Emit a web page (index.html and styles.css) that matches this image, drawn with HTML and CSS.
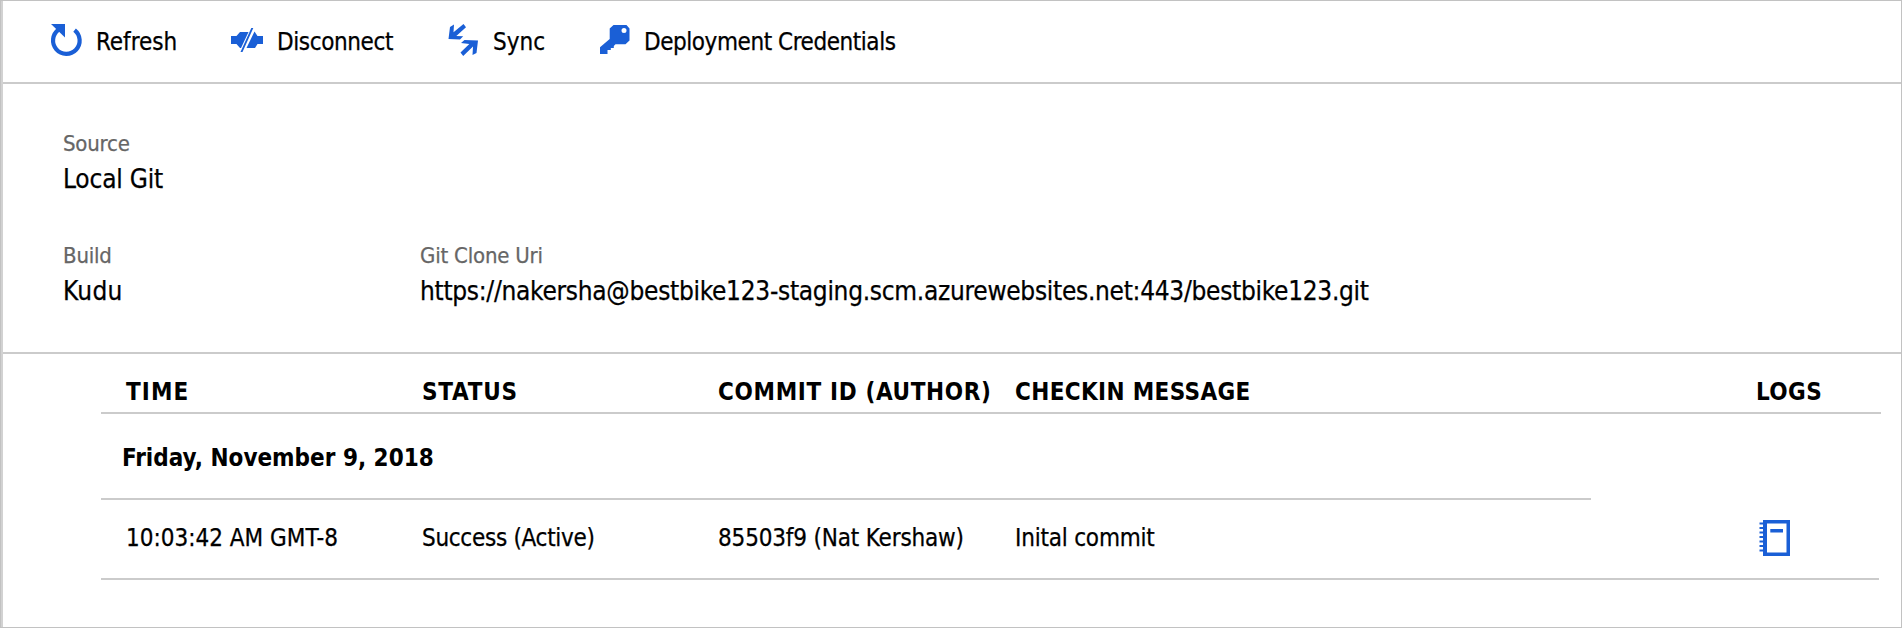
FILE: index.html
```html
<!DOCTYPE html>
<html lang="en">
<head>
<meta charset="utf-8">
<title>Deployment Center</title>
<link rel="stylesheet" href="styles.css">
</head>
<body>
<main class="panel">
  <nav class="toolbar">
    <a class="command">
      <svg class="icon" viewBox="0 0 32 32"><path d="M8.500 5.800A13.300 13.300 0 1 0 24.600 6.100" fill="none" stroke="currentColor" stroke-width="4.200"/><path d="M1 0h14v13.500z"/></svg>
      <span class="refresh">Refresh</span>
    </a>
    <a class="command">
      <svg class="icon" viewBox="0 0 32 32"><path d="M0 12h5.500L9 8h8.500L10 24H9l-3.500-4H0zM23.500 7.500 26.500 12H32v8h-5.500L24 24h-8.500zM20.300 4h2L11.500 28h-2z"/></svg>
      <span class="disconnect">Disconnect</span>
    </a>
    <a class="command">
      <svg class="icon" viewBox="0 0 32 32"><path d="M16.500 0l2.500 3.300L9.300 12l6.900.200-3.200 3.300L1.500 15 3 3l4-2.500-.500 7.700zM14 19l3.500-3L31 16.400 29.500 29l-4 2 .500-8.500L16.200 32 13.500 28.600 22.300 20z"/></svg>
      <span>Sync</span>
    </a>
    <a class="command">
      <svg class="icon" viewBox="0 0 32 32"><path fill-rule="evenodd" d="M15.500 1h13l3 3.500v12l-4 3.800H17.500L15.800 22v2h-3v2H9.500v4H2v-6.700L11.700 15V4.500zM26 4a2.500 2.500 0 1 0 0 5 2.500 2.500 0 0 0 0-5z"/></svg>
      <span class="credentials">Deployment Credentials</span>
    </a>
  </nav>

  <section class="details">
    <div class="field">
      <div class="label">Source</div>
      <div class="value">Local Git</div>
    </div>
    <div class="field build">
      <div class="label">Build</div>
      <div class="value kudu">Kudu</div>
    </div>
    <div class="field">
      <div class="label">Git Clone Uri</div>
      <div class="value uri">https://nakersha@bestbike123-staging.scm.azurewebsites.net:443/bestbike123.git</div>
    </div>
  </section>

  <section class="history">
    <div class="row head">
      <div class="h-time">TIME</div>
      <div class="h-status">STATUS</div>
      <div class="h-commit">COMMIT ID (AUTHOR)</div>
      <div class="h-message">CHECKIN MESSAGE</div>
      <div class="h-logs">LOGS</div>
    </div>
    <div class="date">Friday, November 9, 2018</div>
    <div class="row entry">
      <div>10:03:42 AM GMT-8</div>
      <div class="status">Success (Active)</div>
      <div class="commit">85503f9 (Nat Kershaw)</div>
      <div class="message">Inital commit</div>
      <div class="logs"><svg class="log-icon" viewBox="0 0 32 36"><path fill-rule="evenodd" d="M4 0h27v36H4zM8 3.500v29h19.500v-29z"/><path d="M11.300 9H24v3.500H11.300zM.500 2.500H4v2H.500zM.500 7H4v2H.500zM.500 11.500H4v2H.500zM.500 16H4v2H.500zM.500 20.500H4v2H.500zM.500 25H4v2H.500zM.500 29.500H4v2H.500z"/></svg></div>
    </div>
  </section>
</main>
</body>
</html>
```
FILE: styles.css
```css
* { box-sizing: border-box; }

body {
  margin: 0;
  background: #fff;
  color: #000;
  font: 24px/30px "DejaVu Sans Condensed", "DejaVu Sans", Tahoma, sans-serif;
  font-stretch: condensed;
  white-space: nowrap;
}

.panel {
  height: 628px;
  border: 1px solid #c2c2c2;
  box-shadow: inset 2px 0 #d2d2d2;
  padding-left: 2px;
  overflow: hidden;
}

.toolbar {
  display: grid;
  grid-template-columns: 181px 216px 151px auto;
  align-items: center;
  height: 83px;
  padding-left: 47px;
  border-bottom: 2px solid #cbcbcb;
  -webkit-text-stroke: .25px;
}

.command { display: flex; align-items: center; gap: 14px; }
.icon { width: 32px; height: 32px; margin-top: -3px; color: #1a5fd6; fill: #1a5fd6; overflow: visible; -webkit-text-stroke: 0; }
.refresh { letter-spacing: -.05px; }
.disconnect { letter-spacing: -.4px; }
.credentials { letter-spacing: -.444px; }

.details {
  display: grid;
  grid-template-columns: 357px auto;
  align-content: start;
  row-gap: 45px;
  height: 270px;
  padding: 45px 0 0 60px;
  border-bottom: 2px solid #cbcbcb;
  -webkit-text-stroke: .25px;
}

.label { font-size: 22px; color: #666; letter-spacing: -.2px; }
.value { margin-top: 3px; font-size: 26px; line-height: 34px; letter-spacing: -.2px; }
.build { grid-column: 1; }
.kudu { letter-spacing: .3px; }
.uri { letter-spacing: -.29px; }

.history { padding-left: 98px; }

.row {
  display: grid;
  grid-template-columns: 296px 296px 297px 741px auto;
  align-items: center;
  padding-left: 25px;
  border-bottom: 2px solid #cbcbcb;
}

.head { width: 1780px; height: 60px; padding-top: 17px; font-weight: bold; }
.h-time { letter-spacing: 1.1px; }
.h-status { letter-spacing: .8px; }
.h-commit { letter-spacing: .65px; }
.h-message { letter-spacing: .36px; }
.h-logs { letter-spacing: .4px; }

.date {
  width: 1490px;
  height: 86px;
  padding: 29px 0 0 21px;
  border-bottom: 2px solid #cbcbcb;
  font-weight: bold;
}

.entry { width: 1778px; height: 80px; padding-bottom: 3px; -webkit-text-stroke: .25px; }
.status { letter-spacing: -.3px; }
.commit { letter-spacing: -.17px; }
.message { letter-spacing: -.2px; }
.logs { display: flex; padding-left: 3px; }
.log-icon { width: 32px; height: 36px; fill: #1a5fd6; }
```
